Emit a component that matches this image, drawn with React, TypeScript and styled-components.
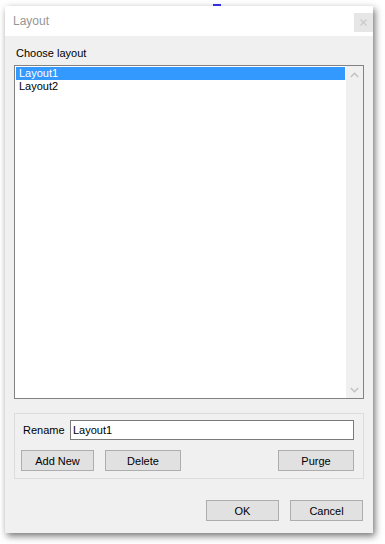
import styled, { createGlobalStyle } from 'styled-components';

const GlobalStyle = createGlobalStyle`
  html, body {
    margin: 0;
    padding: 0;
    background: #ffffff;
  }
  body {
    font-family: 'Liberation Sans', Arial, sans-serif;
    font-size: 11px;
    color: #000000;
  }
`;

const layouts = ['Layout1', 'Layout2'];

export default function App() {
  return (
    <>
      <GlobalStyle />
      <Page>
        <CursorMark />
        <Window>
          <TitleBar>
            <Title>Layout</Title>
            <CloseButton aria-label="Close">
              <svg width="7" height="7" viewBox="0 0 7 7">
                <path
                  d="M0.5 0.5 L6.5 6.5 M6.5 0.5 L0.5 6.5"
                  stroke="#c9c9c9"
                  strokeWidth="1.1"
                  fill="none"
                />
              </svg>
            </CloseButton>
          </TitleBar>
          <Body>
            <Label>Choose layout</Label>
            <ListBox>
              <Rows>
                {layouts.map((name, i) => (
                  <Row key={name} $selected={i === 0}>
                    {name}
                  </Row>
                ))}
              </Rows>
              <ScrollBar>
                <ScrollArrow>
                  <svg width="9" height="6" viewBox="0 0 9 6">
                    <path d="M0.8 5 L4.5 1.3 L8.2 5" stroke="#c2c2c2" strokeWidth="1.5" fill="none" />
                  </svg>
                </ScrollArrow>
                <ScrollArrow>
                  <svg width="9" height="6" viewBox="0 0 9 6">
                    <path d="M0.8 1 L4.5 4.7 L8.2 1" stroke="#c2c2c2" strokeWidth="1.5" fill="none" />
                  </svg>
                </ScrollArrow>
              </ScrollBar>
            </ListBox>
            <GroupBox>
              <RenameRow>
                <FieldLabel>Rename</FieldLabel>
                <TextBox defaultValue="Layout1" />
              </RenameRow>
              <ButtonRow>
                <Button $width={73}>Add New</Button>
                <Button $width={76}>Delete</Button>
                <Button $width={76} $pushRight>
                  Purge
                </Button>
              </ButtonRow>
            </GroupBox>
            <Footer>
              <Button $width={73}>OK</Button>
              <Button $width={73}>Cancel</Button>
            </Footer>
          </Body>
        </Window>
      </Page>
    </>
  );
}

const Page = styled.div`
  position: relative;
  width: 385px;
  height: 544px;
  padding: 6px 0 0 5px;
  box-sizing: border-box;
`;

const CursorMark = styled.div`
  position: absolute;
  left: 213px;
  top: 4px;
  width: 8px;
  height: 2px;
  background: #2f2fe0;
`;

const Window = styled.div`
  width: 368px;
  height: 527px;
  display: flex;
  flex-direction: column;
  background: #f0f0f0;
  box-shadow: 2px 3px 7px rgba(0, 0, 0, 0.55);
`;

const TitleBar = styled.div`
  height: 30px;
  flex: none;
  display: flex;
  align-items: flex-start;
  background: #ffffff;
  padding-left: 8px;
`;

const Title = styled.div`
  flex: 1;
  font-size: 12px;
  line-height: 30px;
  color: #959595;
`;

const CloseButton = styled.div`
  width: 19px;
  height: 19px;
  margin: 7px 0 0 0;
  display: flex;
  align-items: center;
  justify-content: center;
  background: #e6e6e6;
`;

const Body = styled.div`
  flex: 1;
  display: flex;
  flex-direction: column;
  padding: 11px 9px 12px 9px;
`;

const Label = styled.div`
  height: 13px;
  line-height: 13px;
  padding-left: 2px;
  margin-bottom: 5px;
`;

const ListBox = styled.div`
  height: 334px;
  box-sizing: border-box;
  display: flex;
  background: #ffffff;
  border: 1px solid #828282;
`;

const Rows = styled.div`
  flex: 1;
  padding: 1px 1px 0 1px;
`;

const Row = styled.div<{ $selected?: boolean }>`
  height: 13px;
  line-height: 13px;
  padding-left: 3px;
  color: ${(p) => (p.$selected ? '#ffffff' : '#000000')};
  background: ${(p) => (p.$selected ? '#3399ff' : 'transparent')};
`;

const ScrollBar = styled.div`
  width: 17px;
  display: flex;
  flex-direction: column;
  justify-content: space-between;
  background: #f0f0f0;
`;

const ScrollArrow = styled.div`
  height: 17px;
  display: flex;
  align-items: center;
  justify-content: center;
`;

const GroupBox = styled.div`
  margin-top: 14px;
  height: 66px;
  box-sizing: border-box;
  border: 1px solid #dcdcdc;
  padding: 6px 9px 7px 6px;
  display: flex;
  flex-direction: column;
  gap: 10px;
`;

const RenameRow = styled.div`
  display: flex;
  align-items: center;
  height: 20px;
`;

const FieldLabel = styled.div`
  width: 49px;
  padding-left: 2px;
  box-sizing: border-box;
`;

const TextBox = styled.input`
  flex: 1;
  height: 20px;
  box-sizing: border-box;
  border: 1px solid #7a7a7a;
  background: #ffffff;
  padding: 0 2px;
  font-family: 'Liberation Sans', Arial, sans-serif;
  font-size: 11px;
  color: #000000;
  outline: none;
`;

const ButtonRow = styled.div`
  display: flex;
  gap: 11px;
`;

const Button = styled.button<{ $width: number; $pushRight?: boolean }>`
  width: ${(p) => p.$width}px;
  height: 21px;
  box-sizing: border-box;
  margin-left: ${(p) => (p.$pushRight ? 'auto' : '0')};
  border: 1px solid #adadad;
  background: #e1e1e1;
  font-family: 'Liberation Sans', Arial, sans-serif;
  font-size: 11px;
  color: #000000;
  padding: 0;
`;

const Footer = styled.div`
  margin-top: 21px;
  padding-right: 1px;
  display: flex;
  justify-content: flex-end;
  gap: 11px;
`;
